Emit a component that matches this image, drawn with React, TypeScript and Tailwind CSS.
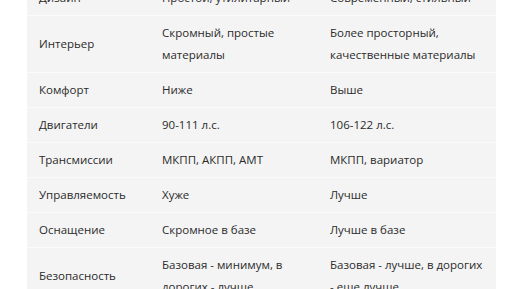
const ROWS: [string, string, string][] = [
  ["Дизайн", "Простой, утилитарный", "Современный, стильный"],
  ["Интерьер", "Скромный, простые материалы", "Более просторный, качественные материалы"],
  ["Комфорт", "Ниже", "Выше"],
  ["Двигатели", "90-111 л.с.", "106-122 л.с."],
  ["Трансмиссии", "МКПП, АКПП, АМТ", "МКПП, вариатор"],
  ["Управляемость", "Хуже", "Лучше"],
  ["Оснащение", "Скромное в базе", "Лучше в базе"],
  ["Безопасность", "Базовая - минимум, в дорогих - лучше", "Базовая - лучше, в дорогих - еще лучше"],
];

export default function App() {
  return (
    <div className="h-[289px] overflow-hidden bg-white font-['Open_Sans',sans-serif] text-[11.5px] text-[#2b2b2b]">
      <table className="-mt-[19px] ml-[27px] w-[469px] table-fixed border-collapse bg-[#f4f4f4]">
        <colgroup>
          <col className="w-[123px]" />
          <col className="w-[168px]" />
          <col className="w-[178px]" />
        </colgroup>
        <tbody>
          {ROWS.map(([name, a, b]) => (
            <tr key={name} className="border-b border-[#fafafa]">
              <td className="py-[6px] pl-[12px] pr-2 align-middle leading-[22px]">{name}</td>
              <td className="py-[6px] pl-[12px] pr-2 align-middle leading-[22px]">{a}</td>
              <td className="py-[6px] pl-[12px] pr-2 align-middle leading-[22px]">{b}</td>
            </tr>
          ))}
        </tbody>
      </table>
    </div>
  );
}
